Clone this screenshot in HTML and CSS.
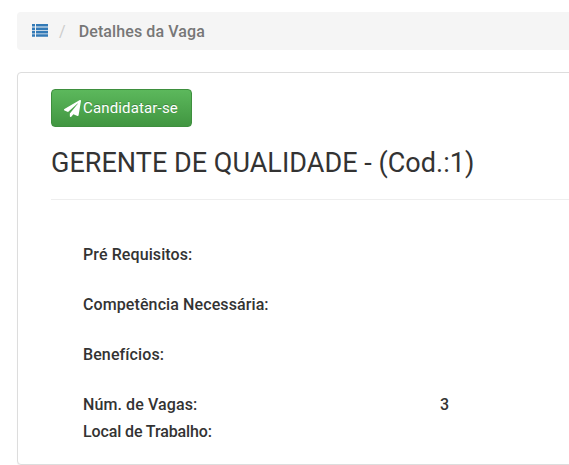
FILE: index.html
```html
<!DOCTYPE html>
<html lang="pt">
<head>
<meta charset="utf-8">
<title>Detalhes da Vaga</title>
<link rel="stylesheet" href="styles.css">
</head>
<body>
<div class="page">
  <nav class="crumb">
    <svg class="crumb-icon" viewBox="0 0 16 13" width="16" height="13" aria-hidden="true">
      <path d="M0 0h3v2.6H0zM4 0h12v2.6H4zM0 3.4h3V6H0zM4 3.4h12V6H4zM0 6.8h3v2.6H0zM4 6.8h12v2.6H4zM0 10.2h3v2.6H0zM4 10.2h12v2.6H4z"/>
    </svg>
    <span class="crumb-sep">/</span>
    <span class="crumb-current">Detalhes da Vaga</span>
  </nav>
  <main class="card">
    <a class="btn" href="#">
      <svg class="btn-icon" viewBox="0 0 512 512" width="17" height="17" aria-hidden="true">
        <path d="M476 3.2 12.500 270.600c-18.100 10.400-15.800 35.600 2.200 43.200L121 358.400 408 105.400c5.500-4.900 13.300 2.600 8.600 8.300L176 407v80.500c0 23.600 28.500 32.900 42.500 15.800L282 426l124.600 52.200c14.200 6 30.400-2.900 33-18.200l72-432C515 7.800 493.300-6.800 476 3.200z"/>
      </svg>
      <span>Candidatar-se</span>
    </a>
    <h1 class="title">GERENTE DE QUALIDADE - (Cod.:1)</h1>
    <hr class="rule">
    <dl class="details">
      <div class="row spaced"><dt>Pré Requisitos:</dt><dd></dd></div>
      <div class="row spaced"><dt>Competência Necessária:</dt><dd></dd></div>
      <div class="row spaced"><dt>Benefícios:</dt><dd></dd></div>
      <div class="row"><dt>Núm. de Vagas:</dt><dd>3</dd></div>
      <div class="row"><dt class="tight">Local de Trabalho:</dt><dd></dd></div>
    </dl>
  </main>
</div>
</body>
</html>
```
FILE: styles.css
```css
* { box-sizing: border-box; }
html, body { margin: 0; height: 465px; overflow: hidden; background: #fff; }
body { font-family: Roboto, "Liberation Sans", sans-serif; color: #333; font-size: 16px; letter-spacing: .1px; }
.page { width: 640px; padding: 12px 0 0 17px; }
.crumb {
  display: flex; align-items: center; height: 38px; padding: 0 15px;
  background: #f5f5f5; border-radius: 4px;
}
.crumb-icon { fill: #337ab7; flex: none; margin-top: -2px; }
.crumb-sep { color: #ccc; margin: 0 13px 0 11px; }
.crumb-current { color: #777; font-weight: 500; }
.card {
  margin-top: 22px; height: 393px; padding: 16px 33px 0;
  border: 1px solid #ddd; border-radius: 4px; background: #fff;
  box-shadow: 0 1px 1px rgba(0,0,0,.05);
}
.btn {
  display: inline-flex; align-items: center; gap: 2px; width: 141px; height: 38px; padding: 0 12px;
  color: #fff; text-decoration: none; border: 1px solid #3e8f3e; border-radius: 4px;
  background: linear-gradient(#5cb85c, #419641); font-size: 15px; letter-spacing: .15px;
  white-space: nowrap; text-shadow: 0 -1px 0 rgba(0,0,0,.2);
}
.btn-icon { fill: #fff; flex: none; }
.title { margin: 19px 0 0; font-size: 27px; font-weight: 400; line-height: 34px; color: #333; letter-spacing: .03px; }
.rule { margin: 19px 0 0; border: 0; border-top: 1px solid #eee; }
.details { margin: 45px 0 0; padding-left: 32px; }
.row { display: grid; grid-template-columns: 357px 1fr; line-height: 20px; margin-bottom: 7px; }
.row.spaced { margin-bottom: 30px; }
dt { font-weight: 500; }
dt.tight { letter-spacing: -.12px; }
dd { margin: 0; font-weight: 500; }
```
